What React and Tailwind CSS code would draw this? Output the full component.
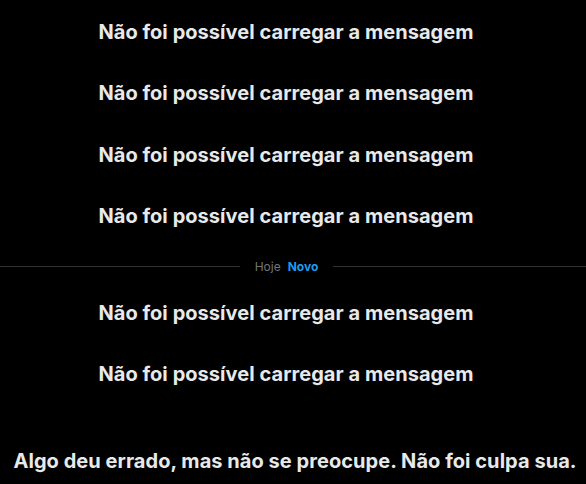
const msg = 'Não foi possível carregar a mensagem'

function FailedMessage() {
  return (
    <div className="h-[61.5px] flex items-center justify-center pr-[14px]">
      <span className="text-[20px] font-bold text-[#e7e9ea] tracking-[0.05px]">{msg}</span>
    </div>
  )
}

export default function App() {
  return (
    <div className="w-[586px] h-[484px] bg-black overflow-hidden flex flex-col" style={{ fontFamily: 'Inter, "Noto Sans", sans-serif' }}>
      <div className="pt-[1px]">
        <FailedMessage />
        <FailedMessage />
        <FailedMessage />
        <FailedMessage />
      </div>

      <div className="h-[35px] pt-[4px] flex items-center">
        <div className="flex-1 h-px bg-[#2f3336]" />
        <div className="px-[15px] flex items-center gap-[7px] text-[12px]">
          <span className="text-[#71767b]">Hoje</span>
          <span className="text-[#1d9bf0] font-bold">Novo</span>
        </div>
        <div className="flex-[1_1_13px] h-px bg-[#2f3336]" />
      </div>

      <div>
        <FailedMessage />
        <FailedMessage />
      </div>

      <div className="flex-1 flex items-center justify-center pt-[32px] pl-[4px]">
        <span className="text-[20px] font-bold text-[#e7e9ea] tracking-[0.05px]">
          Algo deu errado, mas não se preocupe. Não foi culpa sua.
        </span>
      </div>
    </div>
  )
}
